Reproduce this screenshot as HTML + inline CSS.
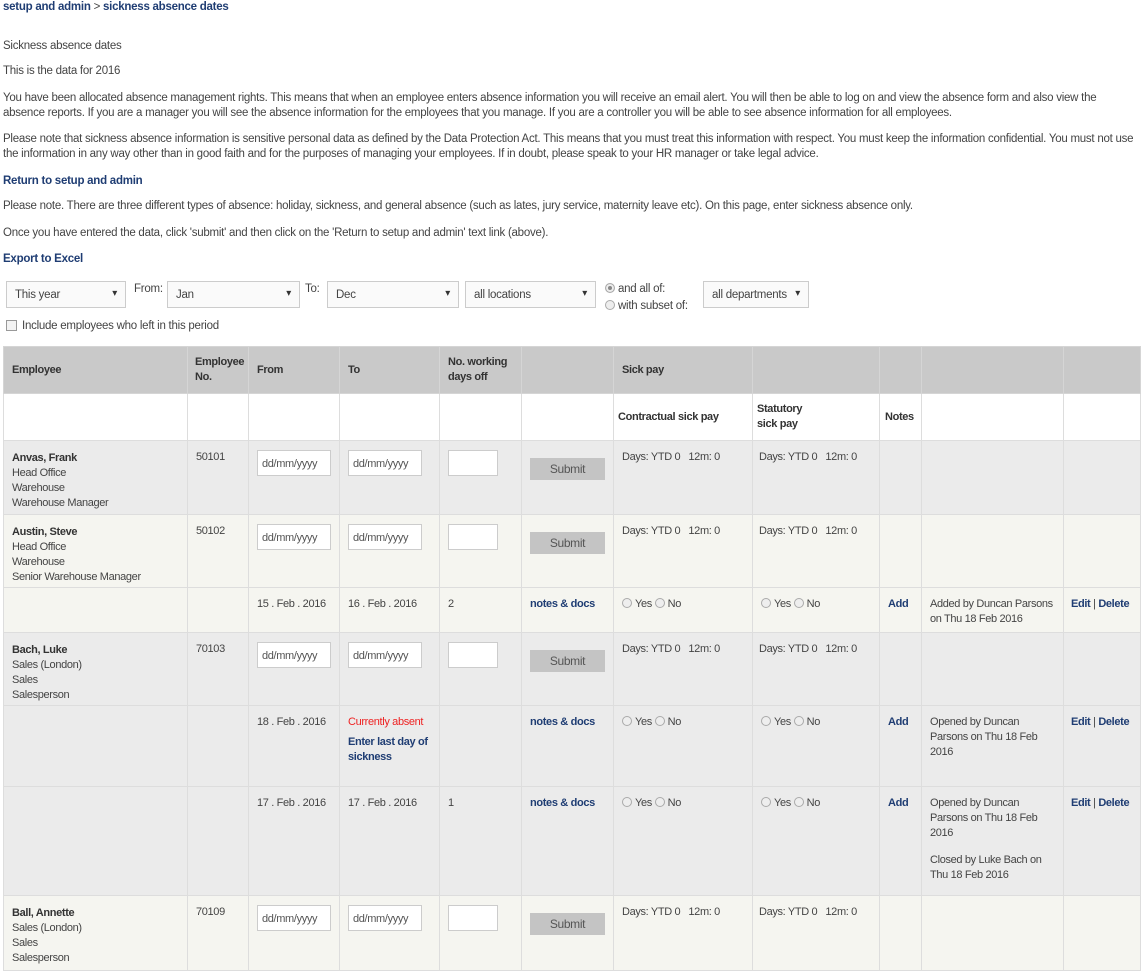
<!DOCTYPE html>
<html><head><meta charset="utf-8"><style>
*{box-sizing:border-box}
body{margin:0;width:1143px;height:970px;overflow:hidden;background:#fff;font-family:"Liberation Sans",sans-serif;font-size:11.5px;letter-spacing:-0.25px;color:#444;position:relative}
.a{position:absolute;left:3px;white-space:nowrap}
.p{position:absolute;left:3px;width:1138px;line-height:15px}
b.l,.l{color:#1f3d73;font-weight:bold}
.sel{position:absolute;top:281px;height:27px;border:1px solid #ccc;background:#fafafa;padding:7px 8px;color:#444}
.sel:after{content:"▾";position:absolute;right:8px;top:6px;font-size:10px;color:#333}
.lab{position:absolute;top:283px}
table{position:absolute;left:3px;top:346px;border-collapse:collapse;table-layout:fixed;width:1137px;font-size:11px;letter-spacing:-0.35px}
td,th{border:1px solid #ddd;vertical-align:top;padding:9px 7px 0 8px;font-weight:normal;text-align:left;line-height:15px;overflow:hidden}
th{background:#c9c9c9;font-weight:bold;color:#333;vertical-align:middle;border-color:#d5d5d5;padding:0 6px 0 8px}
tr.g td{background:#ebebeb}
tr.w td{background:#f5f5f0}
tr.s td{background:#fff;font-weight:bold;color:#333;vertical-align:middle;padding-top:0}
.in{display:inline-block;border:1px solid #ccc;background:#fff;height:26px;padding:6px 4px;color:#555;width:74px;white-space:nowrap}
.in2{display:inline-block;border:1px solid #ccc;background:#fff;height:26px;width:50px}
.btn{display:inline-block;background:#c4c4c4;width:75px;height:22px;text-align:center;line-height:22px;color:#555;margin-top:8px;font-size:12px}
.r{display:inline-block;width:10px;height:10px;border:1px solid #aaa;border-radius:50%;background:#eee;vertical-align:-1px;margin-right:3px}
.red{color:#e22}
.nw{white-space:nowrap}
</style></head><body>
<div class="a l" style="top:1px">setup and admin <span style="font-weight:normal;color:#444">&gt;</span> sickness absence dates</div>
<div class="a" style="top:40px">Sickness absence dates</div>
<div class="a" style="top:65px">This is the data for 2016</div>
<div class="p" style="top:91px">You have been allocated absence management rights. This means that when an employee enters absence information you will receive an email alert. You will then be able to log on and view the absence form and also view the absence reports. If you are a manager you will see the absence information for the employees that you manage. If you are a controller you will be able to see absence information for all employees.</div>
<div class="p" style="top:132px">Please note that sickness absence information is sensitive personal data as defined by the Data Protection Act. This means that you must treat this information with respect. You must keep the information confidential. You must not use the information in any way other than in good faith and for the purposes of managing your employees. If in doubt, please speak to your HR manager or take legal advice.</div>
<div class="a l" style="top:175px">Return to setup and admin</div>
<div class="a" style="top:200px">Please note. There are three different types of absence: holiday, sickness, and general absence (such as lates, jury service, maternity leave etc). On this page, enter sickness absence only.</div>
<div class="a" style="top:227px">Once you have entered the data, click 'submit' and then click on the 'Return to setup and admin' text link (above).</div>
<div class="a l" style="top:253px">Export to Excel</div>
<div class="sel" style="left:6px;width:120px">This year</div>
<div class="lab" style="left:134px">From:</div>
<div class="sel" style="left:167px;width:133px">Jan</div>
<div class="lab" style="left:305px">To:</div>
<div class="sel" style="left:327px;width:132px">Dec</div>
<div class="sel" style="left:465px;width:131px">all locations</div>
<div class="a" style="left:605px;top:283px"><span class="r" style="background:#888;box-shadow:inset 0 0 0 2px #eee"></span>and all of:</div>
<div class="a" style="left:605px;top:300px"><span class="r"></span>with subset of:</div>
<div class="sel" style="left:703px;width:106px">all departments</div>
<div class="a" style="left:6px;top:320px"><span style="display:inline-block;width:11px;height:11px;border:1px solid #999;background:#f3f3f3;vertical-align:-2px;margin-right:5px"></span>Include employees who left in this period</div>
<table>
<colgroup><col style="width:184px"><col style="width:61px"><col style="width:91px"><col style="width:100px"><col style="width:82px"><col style="width:92px"><col style="width:139px"><col style="width:127px"><col style="width:42px"><col style="width:142px"><col style="width:77px"></colgroup>
<tr style="height:47px"><th>Employee</th><th style="padding-left:7px;padding-right:2px">Employee No.</th><th>From</th><th>To</th><th>No. working days off</th><th></th><th>Sick pay</th><th></th><th></th><th></th><th></th></tr>
<tr class="s" style="height:47px"><td></td><td></td><td></td><td></td><td></td><td></td><td class="nw" style="padding-left:4px">Contractual sick pay</td><td style="padding-left:4px">Statutory<br>sick pay</td><td style="padding-left:5px">Notes</td><td></td><td></td></tr>
<tr class="g" style="height:74px"><td style="padding-top:10px"><b style="color:#333">Anvas, Frank</b><br>Head Office<br>Warehouse<br>Warehouse Manager</td><td>50101</td><td><span class="in">dd/mm/yyyy</span></td><td><span class="in">dd/mm/yyyy</span></td><td><span class="in2"></span></td><td><span class="btn">Submit</span></td><td class="nw" style="padding-left:8px">Days: YTD 0 &nbsp; 12m: 0</td><td class="nw" style="padding-left:6px">Days: YTD 0 &nbsp; 12m: 0</td><td></td><td></td><td></td></tr>
<tr class="w" style="height:73px"><td style="padding-top:10px"><b style="color:#333">Austin, Steve</b><br>Head Office<br>Warehouse<br>Senior Warehouse Manager</td><td>50102</td><td><span class="in">dd/mm/yyyy</span></td><td><span class="in">dd/mm/yyyy</span></td><td><span class="in2"></span></td><td><span class="btn">Submit</span></td><td class="nw">Days: YTD 0 &nbsp; 12m: 0</td><td class="nw" style="padding-left:6px">Days: YTD 0 &nbsp; 12m: 0</td><td></td><td></td><td></td></tr>
<tr class="w" style="height:45px"><td></td><td></td><td class="nw">15 . Feb . 2016</td><td class="nw">16 . Feb . 2016</td><td>2</td><td class="l nw">notes &amp; docs</td><td class="nw"><span class="r"></span>Yes <span class="r"></span>No</td><td class="nw"><span class="r"></span>Yes <span class="r"></span>No</td><td class="l">Add</td><td style="padding-right:2px">Added by Duncan Parsons on Thu 18 Feb 2016</td><td class="nw" style="padding-left:7px;padding-right:0"><span class="l">Edit</span> | <span class="l">Delete</span></td></tr>
<tr class="g" style="height:73px"><td style="padding-top:10px"><b style="color:#333">Bach, Luke</b><br>Sales (London)<br>Sales<br>Salesperson</td><td>70103</td><td><span class="in">dd/mm/yyyy</span></td><td><span class="in">dd/mm/yyyy</span></td><td><span class="in2"></span></td><td><span class="btn">Submit</span></td><td class="nw">Days: YTD 0 &nbsp; 12m: 0</td><td class="nw" style="padding-left:6px">Days: YTD 0 &nbsp; 12m: 0</td><td></td><td></td><td></td></tr>
<tr class="g" style="height:81px"><td></td><td></td><td class="nw">18 . Feb . 2016</td><td><span class="red nw">Currently absent</span><br><div style="height:5px"></div><span class="l">Enter last day of sickness</span></td><td></td><td class="l nw">notes &amp; docs</td><td class="nw"><span class="r"></span>Yes <span class="r"></span>No</td><td class="nw"><span class="r"></span>Yes <span class="r"></span>No</td><td class="l">Add</td><td>Opened by Duncan Parsons on Thu 18 Feb 2016</td><td class="nw" style="padding-left:7px;padding-right:0"><span class="l">Edit</span> | <span class="l">Delete</span></td></tr>
<tr class="g" style="height:109px"><td></td><td></td><td class="nw">17 . Feb . 2016</td><td class="nw">17 . Feb . 2016</td><td>1</td><td class="l nw">notes &amp; docs</td><td class="nw"><span class="r"></span>Yes <span class="r"></span>No</td><td class="nw"><span class="r"></span>Yes <span class="r"></span>No</td><td class="l">Add</td><td>Opened by Duncan Parsons on Thu 18 Feb 2016<div style="height:12px"></div>Closed by Luke Bach on Thu 18 Feb 2016</td><td class="nw" style="padding-left:7px;padding-right:0"><span class="l">Edit</span> | <span class="l">Delete</span></td></tr>
<tr class="w" style="height:75px"><td style="padding-top:10px"><b style="color:#333">Ball, Annette</b><br>Sales (London)<br>Sales<br>Salesperson</td><td>70109</td><td><span class="in">dd/mm/yyyy</span></td><td><span class="in">dd/mm/yyyy</span></td><td><span class="in2"></span></td><td><span class="btn">Submit</span></td><td class="nw">Days: YTD 0 &nbsp; 12m: 0</td><td class="nw" style="padding-left:6px">Days: YTD 0 &nbsp; 12m: 0</td><td></td><td></td><td></td></tr>
</table>
</body></html>
